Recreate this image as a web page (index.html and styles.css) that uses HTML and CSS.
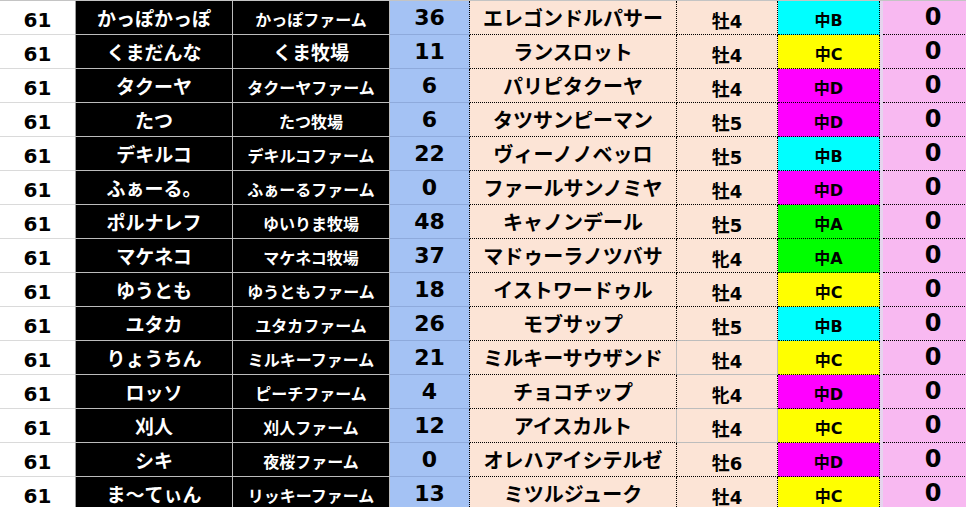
FILE: index.html
```html
<!DOCTYPE html>
<html lang="ja">
<head>
<meta charset="utf-8">
<link rel="stylesheet" href="styles.css">
</head>
<body>
<div class="sheet">
  <div class="c rank">61</div><div class="c blk name">かっぽかっぽ</div><div class="c blk farm">かっぽファーム</div><div class="c num">36</div><div class="c horse">エレゴンドルパサー</div><div class="c sex">牡4</div><div class="c grade gb">中B</div><div class="sp"></div><div class="c pt">0</div>
  <div class="c rank">61</div><div class="c blk name">くまだんな</div><div class="c blk farm big">くま牧場</div><div class="c num">11</div><div class="c horse">ランスロット</div><div class="c sex">牡4</div><div class="c grade gc">中C</div><div class="sp"></div><div class="c pt">0</div>
  <div class="c rank">61</div><div class="c blk name">タクーヤ</div><div class="c blk farm">タクーヤファーム</div><div class="c num">6</div><div class="c horse">パリピタクーヤ</div><div class="c sex">牡4</div><div class="c grade gd">中D</div><div class="sp"></div><div class="c pt">0</div>
  <div class="c rank">61</div><div class="c blk name">たつ</div><div class="c blk farm">たつ牧場</div><div class="c num">6</div><div class="c horse">タツサンピーマン</div><div class="c sex">牡5</div><div class="c grade gd">中D</div><div class="sp"></div><div class="c pt">0</div>
  <div class="c rank">61</div><div class="c blk name">デキルコ</div><div class="c blk farm">デキルコファーム</div><div class="c num">22</div><div class="c horse">ヴィーノノベッロ</div><div class="c sex">牡5</div><div class="c grade gb">中B</div><div class="sp"></div><div class="c pt">0</div>
  <div class="c rank">61</div><div class="c blk name">ふぁーる。</div><div class="c blk farm">ふぁーるファーム</div><div class="c num">0</div><div class="c horse">ファールサンノミヤ</div><div class="c sex">牡4</div><div class="c grade gd">中D</div><div class="sp"></div><div class="c pt">0</div>
  <div class="c rank">61</div><div class="c blk name">ポルナレフ</div><div class="c blk farm">ゆいりま牧場</div><div class="c num">48</div><div class="c horse">キャノンデール</div><div class="c sex">牡5</div><div class="c grade ga">中A</div><div class="sp"></div><div class="c pt">0</div>
  <div class="c rank">61</div><div class="c blk name">マケネコ</div><div class="c blk farm">マケネコ牧場</div><div class="c num">37</div><div class="c horse">マドゥーラノツバサ</div><div class="c sex">牝4</div><div class="c grade ga">中A</div><div class="sp"></div><div class="c pt">0</div>
  <div class="c rank">61</div><div class="c blk name">ゆうとも</div><div class="c blk farm">ゆうともファーム</div><div class="c num">18</div><div class="c horse">イストワードゥル</div><div class="c sex">牡4</div><div class="c grade gc">中C</div><div class="sp"></div><div class="c pt">0</div>
  <div class="c rank">61</div><div class="c blk name">ユタカ</div><div class="c blk farm">ユタカファーム</div><div class="c num">26</div><div class="c horse">モブサップ</div><div class="c sex grid-below">牡5</div><div class="c grade gb">中B</div><div class="sp"></div><div class="c pt">0</div>
  <div class="c rank">61</div><div class="c blk name">りょうちん</div><div class="c blk farm">ミルキーファーム</div><div class="c num">21</div><div class="c horse grid-right">ミルキーサウザンド</div><div class="c sex plain">牡4</div><div class="c grade gc">中C</div><div class="sp"></div><div class="c pt">0</div>
  <div class="c rank">61</div><div class="c blk name">ロッソ</div><div class="c blk farm">ピーチファーム</div><div class="c num">4</div><div class="c horse">チョコチップ</div><div class="c sex grid-below">牝4</div><div class="c grade gd">中D</div><div class="sp"></div><div class="c pt">0</div>
  <div class="c rank">61</div><div class="c blk name">刈人</div><div class="c blk farm">刈人ファーム</div><div class="c num">12</div><div class="c horse grid-right">アイスカルト</div><div class="c sex plain">牡4</div><div class="c grade gc">中C</div><div class="sp"></div><div class="c pt">0</div>
  <div class="c rank">61</div><div class="c blk name">シキ</div><div class="c blk farm">夜桜ファーム</div><div class="c num">0</div><div class="c horse">オレハアイシテルゼ</div><div class="c sex">牡6</div><div class="c grade gd">中D</div><div class="sp"></div><div class="c pt">0</div>
  <div class="c rank">61</div><div class="c blk name">ま〜てぃん</div><div class="c blk farm">リッキーファーム</div><div class="c num">13</div><div class="c horse">ミツルジューク</div><div class="c sex">牡4</div><div class="c grade gc">中C</div><div class="sp"></div><div class="c pt">0</div>
</div>
</body>
</html>
```
FILE: styles.css
```css
html, body {
  margin: 0;
  padding: 0;
  background: #ffffff;
  overflow: hidden;
}

.sheet {
  display: grid;
  grid-template-columns: 76px 157px 157px 80px 207px 101px 102px 3px 100px;
  grid-auto-rows: 34px;
  width: 983px;
  border-top: 1px solid #c4c4c4;
  font-family: "DejaVu Sans", "Noto Sans CJK JP", sans-serif;
  font-weight: 700;
  color: #000;
}

.c {
  box-sizing: border-box;
  display: flex;
  align-items: flex-end;
  justify-content: center;
  line-height: 1;
  white-space: nowrap;
  overflow: hidden;
  padding-bottom: 5px;
}

.rank {
  background: #fff;
  font-size: 20px;
  padding-bottom: 4px;
  border-right: 1px solid #9e9e9e;
  border-bottom: 1px solid #dadada;
}

.blk {
  background: #000;
  color: #fff;
  border-right: 1px solid #bcbcbc;
  border-bottom: 1px solid #bcbcbc;
}

.name {
  font-size: 19px;
}

.farm {
  font-size: 16px;
}

.farm.big {
  font-size: 19px;
}

.num {
  background: #a4c2f4;
  font-size: 22px;
  padding-bottom: 5px;
  border-right: 1px dotted #000;
  border-bottom: 1px solid #8eaadc;
}

.horse {
  background: #fce4d6;
  font-size: 20px;
  border-right: 1px dotted #000;
  border-bottom: 1px dotted #000;
}

.horse.grid-right {
  border-right: 1px solid #bdbdbd;
}

.sex {
  background: #fce4d6;
  font-size: 18px;
  padding-bottom: 3px;
  border-right: 1px dotted #000;
  border-bottom: 1px dotted #000;
}

.sex.grid-below {
  border-bottom: 1px solid #bdbdbd;
}

.sex.plain {
  border-right: 1px solid #bdbdbd;
  border-bottom: 1px solid #bdbdbd;
}

.grade {
  font-size: 16px;
  padding-bottom: 5px;
  border-right: 1px dotted #000;
  border-bottom: 1px dotted #000;
}

.ga { background: #00ff00; }
.gb { background: #00ffff; }
.gc { background: #ffff00; }
.gd { background: #ff00ff; }

.sp {
  background: #e6d3ee;
}

.pt {
  background: #f8b9f1;
  font-size: 24px;
  padding-bottom: 5px;
  border-bottom: 1px dotted #000;
}
```
